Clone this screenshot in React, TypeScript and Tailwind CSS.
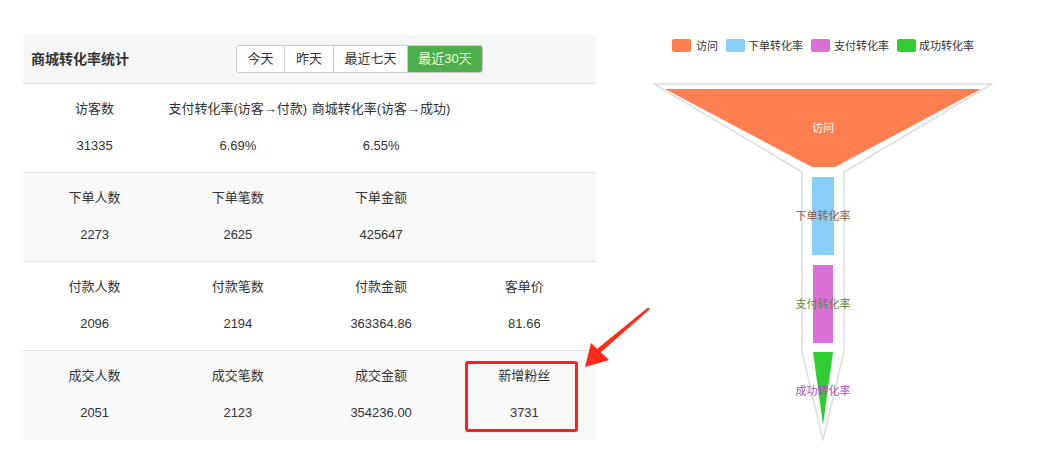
import React from "react";

const rows: { bg: string; cells: [string, string][] }[] = [
  {
    bg: "bg-white",
    cells: [
      ["访客数", "31335"],
      ["支付转化率(访客→付款)", "6.69%"],
      ["商城转化率(访客→成功)", "6.55%"],
      ["", ""],
    ],
  },
  {
    bg: "bg-[#f9f9f9]",
    cells: [
      ["下单人数", "2273"],
      ["下单笔数", "2625"],
      ["下单金额", "425647"],
      ["", ""],
    ],
  },
  {
    bg: "bg-white",
    cells: [
      ["付款人数", "2096"],
      ["付款笔数", "2194"],
      ["付款金额", "363364.86"],
      ["客单价", "81.66"],
    ],
  },
  {
    bg: "bg-[#f9f9f9]",
    cells: [
      ["成交人数", "2051"],
      ["成交笔数", "2123"],
      ["成交金额", "354236.00"],
      ["新增粉丝", "3731"],
    ],
  },
];

const font = "font-['Liberation_Sans','Noto_Sans_CJK_SC',sans-serif]";

function Funnel() {
  const ff = "'Noto Sans CJK SC', sans-serif";
  const legend = [
    { x: 672, tx: 696, c: "#ff7f50", t: "访问" },
    { x: 726, tx: 748, c: "#87cefa", t: "下单转化率" },
    { x: 811, tx: 834, c: "#da70d6", t: "支付转化率" },
    { x: 897, tx: 919, c: "#32cd32", t: "成功转化率" },
  ];
  return (
    <svg
      className="ml-[44px] shrink-0"
      width={412}
      height={464}
      viewBox="640 0 412 464"
    >
      {legend.map((l) => (
        <g key={l.t}>
          <rect x={l.x} y={39} width={19} height={13} rx={2} fill={l.c} />
          <text
            x={l.tx}
            y={49.5}
            fontSize={11}
            fill="#333"
            fontFamily={ff}
          >
            {l.t}
          </text>
        </g>
      ))}
      <polygon
        points="654,84 992,84 844,172 844,352 823,440 802,352 802,172"
        fill="#fff"
        stroke="#dedede"
        strokeWidth={1.5}
        strokeLinejoin="round"
      />
      <polygon points="665,89 981,89 835,167 812,167" fill="#ff7f50" />
      <rect x={812} y={177} width={22} height={78} fill="#87cefa" />
      <rect x={813} y={265} width={20} height={78} fill="#da70d6" />
      <polygon points="813,352 833,352 823,425" fill="#32cd32" />
      <text
        x={823}
        y={132}
        fontSize={11}
        fill="#fff"
        textAnchor="middle"
        fontFamily={ff}
      >
        访问
      </text>
      <text
        x={823}
        y={219.5}
        fontSize={11}
        fill="#8a6248"
        textAnchor="middle"
        fontFamily={ff}
      >
        下单转化率
      </text>
      <text
        x={823}
        y={308}
        fontSize={11}
        fill="#4d8f4d"
        textAnchor="middle"
        fontFamily={ff}
      >
        支付转化率
      </text>
      <text
        x={823}
        y={395}
        fontSize={11}
        fill="#b04cb8"
        textAnchor="middle"
        fontFamily={ff}
      >
        成功转化率
      </text>
    </svg>
  );
}

export default function App() {
  const btns = [
    { t: "今天", w: "w-[48px]" },
    { t: "昨天", w: "w-[49px]" },
    { t: "最近七天", w: "w-[74px]" },
  ];
  return (
    <div className={`relative w-[1052px] h-[464px] bg-white flex overflow-hidden ${font}`}>
      <div className="ml-[23px] mt-[35px] w-[573px] shrink-0 flex flex-col">
        <div className="h-[49px] bg-[#f6f6f6] border-b border-[#e3e3e3] flex items-center">
          <div className="pl-[8px] w-[213px] text-[14px] font-bold text-[#333]">
            商城转化率统计
          </div>
          <div className="flex h-[28px] rounded-[3px] border border-[#cccccc] overflow-hidden text-[13px]">
            {btns.map((b) => (
              <div
                key={b.t}
                className={`${b.w} flex items-center justify-center bg-white text-[#333] border-r border-[#cccccc]`}
              >
                {b.t}
              </div>
            ))}
            <div className="w-[74px] flex items-center justify-center bg-[#4cae4c] text-[#eaffd8]">
              最近30天
            </div>
          </div>
        </div>
        {rows.map((r, i) => (
          <div
            key={i}
            className={`h-[89px] grid grid-cols-4 ${r.bg} ${i < 3 ? "border-b border-[#e3e3e3]" : ""}`}
          >
            {r.cells.map(([label, value], j) => (
              <div
                key={j}
                className="flex flex-col items-center pt-[15px] text-[13px] text-[#333] whitespace-nowrap"
              >
                <div className="leading-[20px] h-[20px]">{label}</div>
                <div className="leading-[20px] h-[20px] mt-[17px]">{value}</div>
              </div>
            ))}
          </div>
        ))}
      </div>
      <Funnel />
      <div className="absolute left-[465px] top-[361px] w-[113px] h-[71px] border-[3px] border-[#ff1f1f] rounded-[3px]" />
      <svg
        className="absolute left-0 top-0 pointer-events-none"
        width={1052}
        height={464}
      >
        <polygon points="650,309 648,307.5 597,349 600,353" fill="#ff2a1a" />
        <polygon points="585,367 591,343 609,360" fill="#ff2a1a" />
      </svg>
    </div>
  );
}
